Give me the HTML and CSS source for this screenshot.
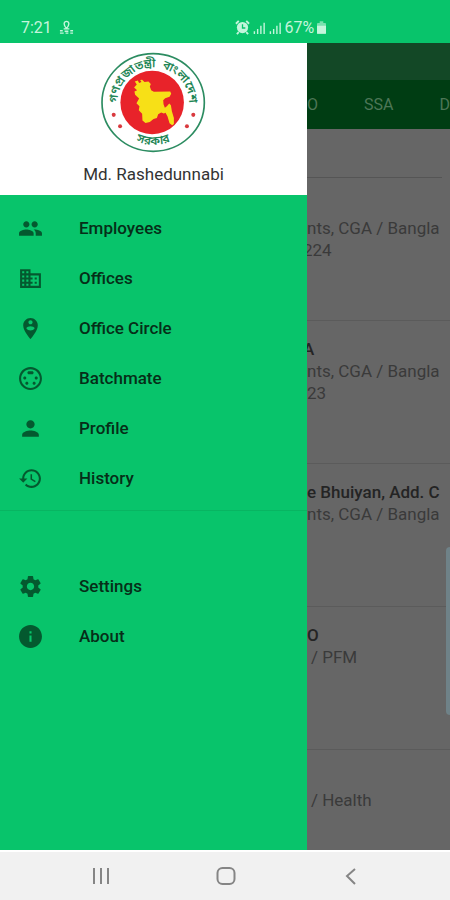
FILE: index.html
```html
<!DOCTYPE html>
<html lang="en">
<head>
<meta charset="utf-8">
<meta name="viewport" content="width=device-width, initial-scale=1">
<title>Employees</title>
<link rel="stylesheet" href="styles.css">
</head>
<body>
<header class="status">
  <div class="status-left">
    <span>7:21</span>
    <svg class="status-icon" viewBox="0 0 16 16" aria-hidden="true"><path d="M8 1.500a2.500 2.500 0 0 1 2.500 2.500c0 1.500-1 3.500-2.500 5-1.500-1.500-2.500-3.500-2.500-5A2.500 2.500 0 0 1 8 1.500zM5 9.500h6M1 11.500h3M6 12h4M12 11.500h3M1 14h4M7 14h3M12 14h3" fill="none" stroke="currentColor" stroke-width="1.500"/></svg>
  </div>
  <div class="status-right">
    <svg class="status-icon" viewBox="0 0 16 16" aria-hidden="true"><path d="M1 4l3-3M12 1l3 3M4 13l-2 2M12 13l2 2" stroke="currentColor" stroke-width="2"/><circle cx="8" cy="8" r="6" fill="currentColor"/><path d="M8 4.500V8.500h3" fill="none" stroke="#08c46b" stroke-width="1.400"/></svg>
    <svg class="signal-icon" viewBox="0 0 14 14" aria-hidden="true"><path d="M1.500 11v3M5 8.500V14M8.500 5v9M12 2v12" stroke="currentColor" stroke-width="1.500"/></svg>
    <svg class="signal-icon" viewBox="0 0 14 14" aria-hidden="true"><path d="M1.500 11v3M5 8.500V14M8.500 5v9M12 2v12" stroke="currentColor" stroke-width="1.500"/></svg>
    <span>67%</span>
    <svg class="battery-icon" viewBox="0 0 10 14" aria-hidden="true"><path d="M3 0h4v2h2q1 0 1 1v10q0 1-1 1H1q-1 0-1-1V3q0-1 1-1h2z" fill="currentColor" opacity=".6"/><path d="M0 5h10v8q0 1-1 1H1q-1 0-1-1z" fill="currentColor"/></svg>
  </div>
</header>
<div class="screen">
  <aside class="drawer">
    <div class="profile">
      <svg class="seal" viewBox="60 22 320 308" role="img" aria-label="Government seal">
        <defs>
          <path id="arc-top" d="M117 206A107 104 0 1 1 321 206"/>
          <path id="arc-bottom" d="M109 239A127 127 0 0 0 329 239"/>
        </defs>
        <ellipse cx="219" cy="176" rx="153" ry="146" fill="#fff" stroke="#2c8c61" stroke-width="5"/>
        <circle cx="216" cy="176" r="95" fill="#e8232a"/>
        <path d="M170 122L164 113L173 110L177 118L184 115L180 109L186 108L193 115L205 113L212 121L209 128L213 139L221 144L270 143L273 150L268 159L255 163L249 169L250 181L254 192L260 187L267 179L272 184L275 202L281 222L281 240L276 244L268 238L262 218L256 207L251 209L243 206L234 211L230 222L220 225L209 234L196 237L187 230L186 210L176 199L178 187L169 178L177 164L165 153L163 143L171 139L162 131Z" fill="#f7e017"/>
        <g fill="#d93a3f"><circle cx="101" cy="213" r="6"/><circle cx="120" cy="247" r="6"/><circle cx="339" cy="213" r="6"/><circle cx="320" cy="247" r="6"/></g>
        <text class="seal-text" lang="bn" text-anchor="middle"><textPath href="#arc-top" startOffset="50%">গণপ্রজাতন্ত্রী&nbsp; বাংলাদেশ</textPath></text>
        <text class="seal-text" lang="bn" text-anchor="middle"><textPath href="#arc-bottom" startOffset="50%">সরকার</textPath></text>
      </svg>
      <p class="name">Md. Rashedunnabi</p>
    </div>
    <nav>
      <ul class="menu">
        <li><a href="#"><svg viewBox="0 0 24 24" aria-hidden="true"><path d="M16 11c1.660 0 2.990-1.340 2.990-3S17.660 5 16 5c-1.660 0-3 1.340-3 3s1.340 3 3 3zm-8 0c1.660 0 2.990-1.340 2.990-3S9.660 5 8 5C6.340 5 5 6.340 5 8s1.340 3 3 3zm0 2c-2.330 0-7 1.170-7 3.500V19h14v-2.500c0-2.330-4.670-3.500-7-3.500zm8 0c-.290 0-.620.020-.970.050 1.160.840 1.970 1.970 1.970 3.450V19h6v-2.500c0-2.330-4.670-3.500-7-3.500z"/></svg>Employees</a></li>
        <li><a href="#"><svg viewBox="0 0 24 24" aria-hidden="true"><path d="M12 7V3H2v18h20V7H12zM6 19H4v-2h2v2zm0-4H4v-2h2v2zm0-4H4V9h2v2zm0-4H4V5h2v2zm4 12H8v-2h2v2zm0-4H8v-2h2v2zm0-4H8V9h2v2zm0-4H8V5h2v2zm10 12h-8v-2h2v-2h-2v-2h2v-2h-2V9h8v10zm-2-8h-2v2h2v-2zm0 4h-2v2h2v-2z"/></svg>Offices</a></li>
        <li><a href="#"><svg viewBox="0 0 24 24" aria-hidden="true"><path d="M12 2C8.140 2 5 5.140 5 9c0 5.250 7 13 7 13s7-7.750 7-13c0-3.860-3.140-7-7-7zm0 2c1.100 0 2 .900 2 2s-.900 2-2 2-2-.900-2-2 .900-2 2-2zm0 10c-1.670 0-3.140-.850-4-2.150.020-1.320 2.670-2.050 4-2.050s3.980.730 4 2.050c-.860 1.300-2.330 2.150-4 2.150z"/></svg>Office Circle</a></li>
        <li><a href="#"><svg viewBox="0 0 24 24" aria-hidden="true"><path d="M8 11.500c0-.830-.670-1.500-1.500-1.500S5 10.670 5 11.500 5.670 13 6.500 13 8 12.330 8 11.500zm7-5c0-.830-.670-1.500-1.500-1.500h-3C9.670 5 9 5.670 9 6.500S9.670 8 10.500 8h3c.830 0 1.500-.670 1.500-1.500zM8.500 15c-.830 0-1.500.670-1.500 1.500S7.670 18 8.500 18s1.500-.670 1.500-1.500S9.330 15 8.500 15zM12 1C5.930 1 1 5.930 1 12s4.930 11 11 11 11-4.930 11-11S18.070 1 12 1zm0 20c-4.960 0-9-4.040-9-9s4.040-9 9-9 9 4.040 9 9-4.040 9-9 9zm5.500-11c-.830 0-1.500.670-1.500 1.500s.670 1.500 1.500 1.500 1.500-.670 1.500-1.500-.670-1.500-1.500-1.500zm-2 5c-.830 0-1.500.670-1.500 1.500s.670 1.500 1.500 1.500 1.500-.670 1.500-1.500-.670-1.500-1.500-1.500z"/></svg>Batchmate</a></li>
        <li><a href="#"><svg viewBox="0 0 24 24" aria-hidden="true"><path d="M12 12c2.210 0 4-1.790 4-4s-1.790-4-4-4-4 1.790-4 4 1.790 4 4 4zm0 2c-2.670 0-8 1.340-8 4v2h16v-2c0-2.660-5.330-4-8-4z"/></svg>Profile</a></li>
        <li><a href="#"><svg viewBox="0 0 24 24" aria-hidden="true"><path d="M13 3c-4.970 0-9 4.030-9 9H1l3.890 3.890.070.140L9 12H6c0-3.870 3.130-7 7-7s7 3.130 7 7-3.130 7-7 7c-1.930 0-3.680-.790-4.940-2.060l-1.420 1.420C8.270 19.990 10.510 21 13 21c4.970 0 9-4.030 9-9s-4.030-9-9-9zm-1 5v5l4.280 2.540.720-1.210-3.500-2.080V8H12z"/></svg>History</a></li>
      </ul>
      <ul class="menu menu-more">
        <li><a href="#"><svg viewBox="0 0 24 24" aria-hidden="true"><path d="M19.430 12.980c.040-.320.070-.640.070-.980s-.030-.660-.070-.980l2.110-1.650c.190-.150.240-.420.120-.640l-2-3.460c-.120-.220-.390-.300-.610-.220l-2.490 1c-.520-.400-1.080-.730-1.690-.980l-.380-2.650C14.460 2.180 14.250 2 14 2h-4c-.250 0-.460.180-.490.420l-.380 2.650c-.610.250-1.170.590-1.690.980l-2.490-1c-.230-.090-.490 0-.610.220l-2 3.460c-.130.220-.070.490.120.640l2.110 1.650c-.040.320-.070.650-.070.980s.030.660.070.980l-2.110 1.650c-.190.150-.240.420-.120.640l2 3.460c.120.220.390.300.610.220l2.490-1c.520.400 1.080.730 1.690.980l.380 2.650c.030.240.240.420.490.420h4c.250 0 .460-.180.490-.420l.380-2.650c.610-.250 1.170-.590 1.690-.980l2.490 1c.230.090.490 0 .610-.220l2-3.460c.120-.220.070-.490-.120-.640l-2.110-1.650zM12 15.500c-1.930 0-3.500-1.570-3.500-3.500s1.570-3.500 3.500-3.500 3.500 1.570 3.500 3.500-1.570 3.500-3.500 3.500z"/></svg>Settings</a></li>
        <li><a href="#"><svg viewBox="0 0 24 24" aria-hidden="true"><path d="M12 1C5.930 1 1 5.930 1 12s4.930 11 11 11 11-4.930 11-11S18.070 1 12 1zm1 16h-2v-6h2v6zm0-8h-2V7h2v2z"/></svg>About</a></li>
      </ul>
    </nav>
  </aside>
  <main class="content">
    <div class="appbar"></div>
    <div class="tabs">
      <button type="button">O</button>
      <button type="button">SSA</button>
      <button type="button">D</button>
    </div>
    <div class="search"></div>
    <ul class="people">
      <li><p class="office">nts, CGA / Bangla</p><p class="batch cut">224</p></li>
      <li><h2 class="cut">A</h2><p>nts, CGA / Bangla</p><p>23</p></li>
      <li><h2>e Bhuiyan, Add. C</h2><p>nts, CGA / Bangla</p></li>
      <li><h2>O</h2><p class="gap">/ PFM</p></li>
      <li><p class="office gap">/ Health</p></li>
    </ul>
    <div class="edge-handle"></div>
  </main>
</div>
<footer class="navbar">
  <button type="button" aria-label="Recent apps"><svg viewBox="0 0 20 20"><path d="M3 2v16M10 2v16M17 2v16"/></svg></button>
  <button type="button" aria-label="Home"><svg viewBox="0 0 20 20"><rect x="1.500" y="2" width="17" height="16" rx="5"/></svg></button>
  <button type="button" aria-label="Back"><svg viewBox="0 0 20 20"><path d="M14 3L6 10l8 8"/></svg></button>
</footer>
</body>
</html>
```
FILE: styles.css
```css
* { box-sizing: border-box; margin: 0; padding: 0; }

body {
  display: flex;
  flex-direction: column;
  min-height: 100vh;
  font-family: Roboto, "Liberation Sans", sans-serif;
  font-size: 17px;
  background: #08c46b;
}

ul { list-style: none; }

button { border: 0; background: none; font: inherit; color: inherit; }

.status {
  display: flex;
  height: 43px;
  padding: 12px 2px 0 21px;
  font-size: 16px;
  line-height: 30px;
  color: #c4f5dc;
}

.status-left, .status-right { display: flex; align-items: center; gap: 3px; }
.status-left { flex: 1; gap: 7px; }
.status-right { flex: 1; }
.status-icon { width: 15px; height: 15px; }
.signal-icon { width: 13px; height: 13px; }
.battery-icon { width: 9px; height: 13px; }

.screen { display: flex; flex: 1; }

.drawer { flex: 0 0 307px; background: #08c46b; }

.profile {
  display: flex;
  flex-direction: column;
  align-items: center;
  gap: 9px;
  padding: 8px 0 10px;
  background: #fff;
}

.seal { width: 107px; height: 103px; }
.seal-text { font-family: "Noto Sans Bengali", "Noto Sans", sans-serif; font-size: 36px; font-weight: 600; fill: #1f8656; }
.name { line-height: 22px; color: #333; }

.menu { padding: 8px 0 7px; }
.menu-more { padding-top: 50px; border-top: 1px solid #08b562; }

.menu a {
  display: flex;
  align-items: center;
  gap: 36px;
  height: 50px;
  padding-left: 18px;
  font-size: 17px;
  font-weight: 500;
  color: #062e18;
  text-decoration: none;
}

.menu svg { width: 25px; height: 25px; fill: #04592f; }

.content {
  position: relative;
  flex: 1;
  min-width: 0;
  overflow: hidden;
  background: #666;
  color: #3a3a3a;
}

.appbar { height: 37px; background: #134826; }

.tabs {
  display: flex;
  justify-content: space-between;
  height: 49px;
  background: #003d13;
  color: #4d7657;
  font-size: 16px;
}

.search { height: 49px; margin-right: 8px; border-bottom: 1px solid #555; }

.people li {
  display: grid;
  grid-template-rows: repeat(3, 22px);
  height: 143px;
  padding-top: 17px;
  border-bottom: 1px solid #5b5b5b;
  line-height: 22px;
  white-space: nowrap;
}

.people li:last-child { height: auto; border: 0; }
.people h2 { font-size: 17px; font-weight: 500; color: #242424; }
.office { grid-row: 2; }
.batch { grid-row: 3; }
.cut { margin-left: -4px; }
.gap { margin-left: 4px; }

.edge-handle {
  position: absolute;
  top: 504px;
  right: 0;
  width: 4px;
  height: 168px;
  border-radius: 4px 0 0 4px;
  background: #6f8288;
}

.navbar {
  display: flex;
  justify-content: space-around;
  height: 50px;
  padding: 0 36px 0 38px;
  background: #f1f1f1;
  border-top: 2px solid #fff;
}

.navbar button { display: flex; flex: 1; align-items: center; justify-content: center; }
.navbar svg { width: 20px; height: 20px; fill: none; stroke: #858585; stroke-width: 2; }
```
